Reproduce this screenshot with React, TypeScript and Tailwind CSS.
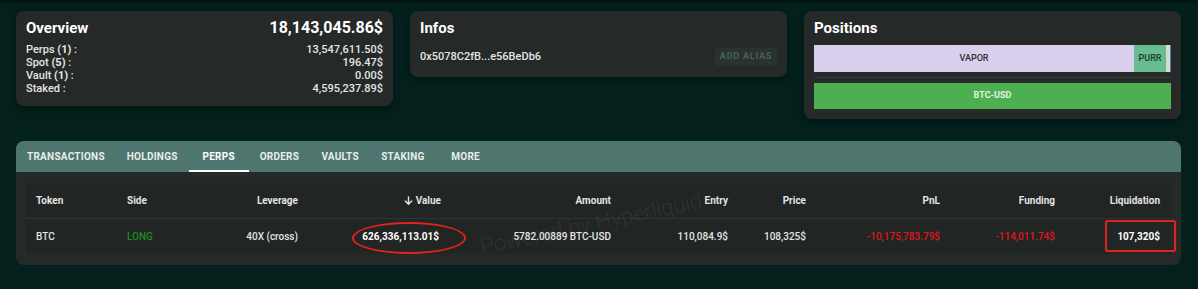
import React from "react";

const rows = [
  { label: "Perps", count: "(1)", value: "13,547,611.50$" },
  { label: "Spot", count: "(5)", value: "196.47$" },
  { label: "Vault", count: "(1)", value: "0.00$" },
  { label: "Staked", count: "", value: "4,595,237.89$" },
];

const tabs = ["TRANSACTIONS", "HOLDINGS", "PERPS", "ORDERS", "VAULTS", "STAKING", "MORE"];

const cols = "grid grid-cols-[91px_82px_109px_143px_170px_117px_78px_134px_115px_105px]";

const Card = ({ children, className = "" }: { children: React.ReactNode; className?: string }) => (
  <div className={`bg-[#252a29] rounded-lg shadow-[0_2px_6px_rgba(0,0,0,0.35)] px-[10px] pt-[7px] ${className}`}>
    {children}
  </div>
);

export default function App() {
  return (
    <div className="min-h-[289px] bg-[#03201c] font-['Roboto',sans-serif] text-[#e4e6e5]">
      <div className="h-[3px] bg-[#021713]" />
      <div className="pl-4 pr-[17px] pt-2">
        {/* top cards */}
        <div className="grid grid-cols-3 gap-[17px] items-start">
          <Card className="pb-[11px]">
            <div className="flex justify-between items-center h-5">
              <h2 className="text-[15px] font-bold text-white">Overview</h2>
              <span className="text-[16px] font-bold text-white">18,143,045.86$</span>
            </div>
            <div className="mt-[5px] text-[11px] font-medium leading-[13px]">
              {rows.map((r) => (
                <div key={r.label} className="flex justify-between">
                  <span>
                    {r.label} {r.count && <b>{r.count}</b>} :
                  </span>
                  <span>{r.value}</span>
                </div>
              ))}
            </div>
          </Card>

          <Card className="pb-[11px]">
            <div className="h-5 flex items-center">
              <h2 className="text-[15px] font-bold text-white">Infos</h2>
            </div>
            <div className="mt-[10px] flex items-center justify-between">
              <span className="text-[11px] font-medium">0x5078C2fB...e56BeDb6</span>
              <button className="h-[18px] w-[62px] rounded bg-[#2a3230] text-[9px] font-bold tracking-[0.8px] text-[#466059]">
                ADD ALIAS
              </button>
            </div>
          </Card>

          <Card className="pb-[10px]">
            <div className="h-5 flex items-center">
              <h2 className="text-[15px] font-bold text-white">Positions</h2>
            </div>
            <div className="mt-[7px] flex h-[27px] text-[9px] font-medium text-[#2d2d33]">
              <div className="flex-1 bg-[#d9cfec] flex items-center justify-center">VAPOR</div>
              <div className="w-8 bg-[#68bc91] flex items-center justify-center text-[#1d3a2b]">PURR</div>
              <div className="w-1 bg-[#d5dccd]" />
              <div className="w-px bg-[#4b7fd1]" />
            </div>
            <div className="mt-[5px] h-px bg-[#373d3c]" />
            <div className="mt-[5px] h-[26px] bg-[#4caf50] flex items-center justify-center text-[9px] font-bold text-[#e3f3e4]">
              BTC-USD
            </div>
          </Card>
        </div>

        {/* tabs card */}
        <div className="mt-[22px] bg-[#252a29] rounded-lg overflow-hidden pb-[11px]">
          <div className="h-[31px] bg-[#4e766f] flex">
            {tabs.map((t) => (
              <div
                key={t}
                className={`relative min-w-[60px] px-[11px] flex items-center justify-center text-[10px] font-bold tracking-[0.25px] ${
                  t === "PERPS" ? "text-white" : "text-[#e6edeb]"
                }`}
              >
                {t}
                {t === "PERPS" && <div className="absolute bottom-0 left-0 right-0 h-[2px] bg-white" />}
              </div>
            ))}
          </div>

          <div className="relative mt-[11px] mx-[10px] bg-[#212524] text-[10px]">
            <div className="pointer-events-none absolute left-[452px] top-[24px] -rotate-[12deg] text-[22px] font-light text-white/[0.08] whitespace-nowrap">
              Powered by Hyperliquid
            </div>
            <div className={`${cols} h-9 items-center font-bold text-[#e2e4e3] border-b border-[#2f3534]`}>
              <div className="pl-[10px]">Token</div>
              <div className="pl-[10px]">Side</div>
              <div className="pr-[10px] text-right">Leverage</div>
              <div className="pr-[10px] flex justify-end items-center gap-[2px]">
                <svg width="11" height="11" viewBox="0 0 24 24" fill="none" stroke="currentColor" strokeWidth="3" strokeLinecap="round" strokeLinejoin="round">
                  <path d="M12 4v16M5 13l7 7 7-7" />
                </svg>
                Value
              </div>
              <div className="pr-[10px] text-right">Amount</div>
              <div className="pr-[10px] text-right">Entry</div>
              <div className="pr-[10px] text-right">Price</div>
              <div className="pr-[10px] text-right">PnL</div>
              <div className="pr-[10px] text-right">Funding</div>
              <div className="pr-[10px] text-right">Liquidation</div>
            </div>
            <div className={`${cols} h-[35px] items-center font-medium text-[#e4e6e5]`}>
              <div className="pl-[10px]">BTC</div>
              <div className="pl-[10px] text-[#1e8a1e]">LONG</div>
              <div className="pr-[10px] text-right">40X (cross)</div>
              <div className="relative pr-[12px] text-right font-bold text-white">
                626,336,113.01$
                <div className="absolute left-[44px] top-[-7px] w-[114px] h-[32px] rounded-[50%] border-2 border-[#e0231c]" />
              </div>
              <div className="pr-[10px] text-right">5782.00889 BTC-USD</div>
              <div className="pr-[10px] text-right">110,084.9$</div>
              <div className="pr-[10px] text-right">108,325$</div>
              <div className="pr-[10px] text-right text-[#e0161a]">-10,175,783.79$</div>
              <div className="pr-[10px] text-right text-[#e0161a]">-114,011.74$</div>
              <div className="relative pr-[10px] text-right font-bold text-white">
                107,320$
                <div className="absolute left-[40px] -right-[6px] top-[-9px] h-[32px] rounded-[2px] border-2 border-[#e0231c]" />
              </div>
            </div>
          </div>
        </div>
      </div>
    </div>
  );
}
